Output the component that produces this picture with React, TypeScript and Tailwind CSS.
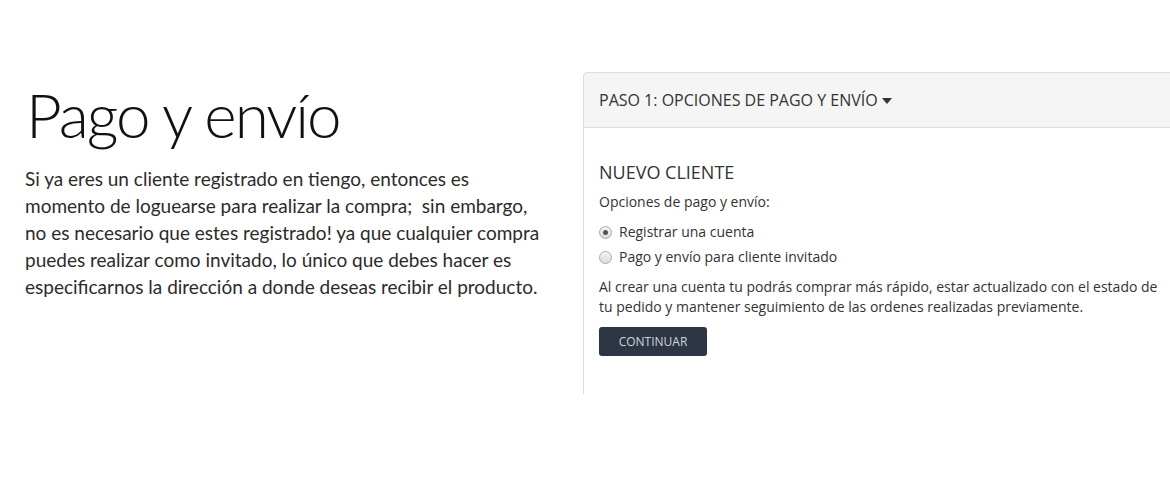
import React from "react";

function Radio({ checked }: { checked?: boolean }) {
  return (
    <span className="relative inline-flex h-[13px] w-[13px] items-center justify-center rounded-full border border-[#a9a9a9] bg-gradient-to-b from-[#f4f4f4] to-[#dcdcdc]">
      {checked && <span className="h-[5px] w-[5px] rounded-full bg-[#555]" />}
    </span>
  );
}

export default function App() {
  return (
    <div className="min-h-[500px] w-[1170px] overflow-hidden bg-white">
      <div className="flex pt-[72px]">
        <div className="w-[583px] shrink-0 pl-[25px]">
          <h1
            className="mt-[4px] text-[62px] font-light leading-[76px] tracking-[-2px] text-[#111]"
            style={{ fontFamily: "Lato, sans-serif" }}
          >
            <span className="pl-[1px]">Pago y envío</span>
          </h1>
          <p
            className="mt-[13px] text-[19px] font-normal leading-[27px] text-[#2b2b2b] whitespace-nowrap"
            style={{ fontFamily: "Lato, sans-serif" }}
          >
            Si ya eres un cliente registrado en tiengo, entonces es
            <br />
            momento de loguearse para realizar la compra;&nbsp; sin embargo,
            <br />
            no es necesario que estes registrado! ya que cualquier compra
            <br />
            puedes realizar como invitado, lo único que debes hacer es
            <br />
            especificarnos la dirección a donde deseas recibir el producto.
          </p>
        </div>
        <div
          className="w-[600px] shrink-0 text-[#333]"
          style={{ fontFamily: "'Open Sans', sans-serif" }}
        >
          <div className="flex h-[56px] items-center rounded-tl-[4px] border border-[#ddd] bg-[#f5f5f5] px-[15px]">
            <span className="text-[16px] text-[#333]">PASO 1: OPCIONES DE PAGO Y ENVÍO</span>
            <svg className="ml-[4px] mt-[1px]" width="10" height="6" viewBox="0 0 10 6">
              <path d="M0 0 L10 0 L5 6 Z" fill="#333" />
            </svg>
          </div>
          <div className="h-[266px] border-l border-[#ddd] px-[15px] pt-[33px]">
            <h2 className="text-[18px] leading-[22px] text-[#333]">NUEVO CLIENTE</h2>
            <p className="mt-[9px] text-[14px] leading-[20px]">Opciones de pago y envío:</p>
            <label className="mt-[10px] flex items-center gap-[7px] text-[14px] leading-[20px]">
              <Radio checked />
              <span>Registrar una cuenta</span>
            </label>
            <label className="mt-[5px] flex items-center gap-[7px] text-[14px] leading-[20px]">
              <Radio />
              <span>Pago y envío para cliente invitado</span>
            </label>
            <p className="mt-[10px] text-[14px] leading-[20px]">
              Al crear una cuenta tu podrás comprar más rápido, estar actualizado con el estado de
              <br />
              tu pedido y mantener seguimiento de las ordenes realizadas previamente.
            </p>
            <button className="mt-[10px] flex h-[29px] w-[108px] items-center justify-center rounded-[3px] bg-[#2c3644] text-[12px] text-[#d0d4d8]">
              CONTINUAR
            </button>
          </div>
        </div>
      </div>
    </div>
  );
}
